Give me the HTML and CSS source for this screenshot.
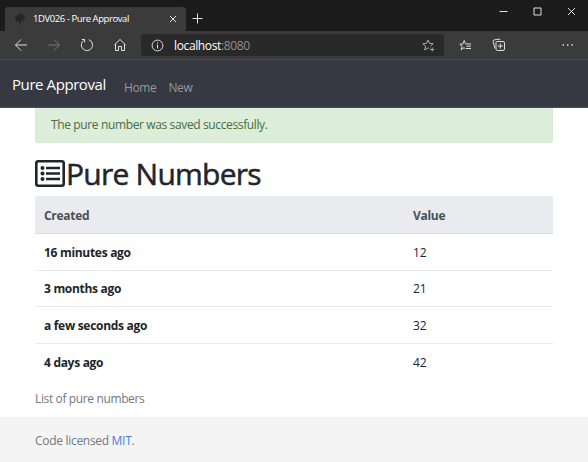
FILE: index.html
```html
<!DOCTYPE html>
<html lang="en">
<head>
<meta charset="utf-8">
<title>1DV026 - Pure Approval</title>
<link rel="stylesheet" href="styles.css">
</head>
<body>
<header class="browser">
  <div class="tabs">
    <div class="tab">
      <svg class="favicon" width="12" height="14" viewBox="0 0 12 14"><path d="M5 1l2 1 1-1 1 2 2 0-1 2 2 1-2 1 0 2-2-1-1 2 0 3H5.500v-3L4 9 2 10 2 8 0 7l2-1-1-2 2 0 0-2 2 1z" fill="#262626"/></svg>
      <span class="tab-title">1DV026 - Pure Approval</span>
      <svg class="tab-close" width="8" height="8" viewBox="0 0 8 8"><path d="M1 1l6 6M7 1L1 7"/></svg>
    </div>
    <svg class="tab-new" width="11" height="11" viewBox="0 0 11 11"><path d="M5.500 .5v10M.5 5.500h10"/></svg>
    <div class="window-buttons">
      <svg width="9" height="9" viewBox="0 0 9 9"><path d="M.5 4.500h8"/></svg>
      <svg width="9" height="9" viewBox="0 0 9 9"><path d="M1 1h7v7H1z"/></svg>
      <svg width="9" height="9" viewBox="0 0 9 9"><path d="M1 1l7 7M8 1L1 8"/></svg>
    </div>
  </div>
  <div class="toolbar">
    <svg class="back" width="14" height="14" viewBox="0 0 14 14"><path d="M13 7H1.500M7 1.500L1.500 7 7 12.500"/></svg>
    <svg class="forward" width="14" height="14" viewBox="0 0 14 14"><path d="M1 7h11.500M7 1.500L12.500 7 7 12.500"/></svg>
    <svg class="reload" width="14" height="14" viewBox="0 0 14 14"><path d="M8.800 1.700a5.600 5.600 0 1 1-5.300.9M1.800 1.500h2.900v2.900"/></svg>
    <svg class="home" width="14" height="14" viewBox="0 0 14 14"><path d="M1.300 7L7 1.500 12.700 7M2.500 6v6.500h3v-4h3v4h3V6"/></svg>
    <div class="address">
      <svg width="13" height="13" viewBox="0 0 13 13"><circle cx="6.500" cy="6.500" r="5.400"/><path d="M6.500 5.500v4M6.500 3.300v1.200"/></svg>
      <span class="url">localhost<span class="port">:8080</span></span>
      <svg class="star" width="13" height="13" viewBox="0 0 13 13"><path d="M7.200 9.500L6 8.800 2.700 11l.9-3.900L.8 4.700l3.700-.4L6 1l1.500 3.300 3.700.4-2.900 2.500M10.200 8.500v4M8.200 10.500h4"/></svg>
    </div>
    <svg class="favorites" width="13" height="13" viewBox="0 0 13 13"><path d="M6.500 9.800L5 8.700 2.200 10.700 3.200 7.400 .8 5.200l3-.2L5.200 1.500l1.300 3.300M6.500 5H12M7.500 7.200H12M7 9.500h5"/></svg>
    <svg class="collections" width="14" height="14" viewBox="0 0 14 14"><path d="M3 10.500L1 3.200Q1 2.400 2 2l5-1q1 0 1.200 1M4.500 3.500H11q1.500 0 1.500 1.500v6q0 1.500-1.500 1.500H5.500Q4 12.500 4 11V4M8.300 5.500v5M5.800 8h5"/></svg>
    <svg class="more" width="12" height="4" viewBox="0 0 12 4"><path d="M.5 2H2M5 2h1.500M9.500 2H11"/></svg>
  </div>
</header>
<nav class="navbar">
  <a class="brand">Pure Approval</a>
  <a class="nav-link">Home</a>
  <a class="nav-link nav-new">New</a>
</nav>
<main class="container">
  <div class="alert">The pure number was saved successfully.</div>
  <h1>
    <svg class="list-icon" width="30" height="27" viewBox="0 0 30 27"><rect x="1.300" y="1.300" width="27.400" height="24.400" rx="2"/><path d="M11 8H25M11 13.500h14M11 19h14"/><g class="dots"><circle cx="7.500" cy="8" r="2"/><circle cx="7.500" cy="13.500" r="2"/><circle cx="7.500" cy="19" r="2"/></g></svg><span class="heading-text">Pure Numbers</span>
  </h1>
  <table>
    <thead><tr><th class="created">Created</th><th class="value">Value</th></tr></thead>
    <tbody>
      <tr><th>16 minutes ago</th><td>12</td></tr>
      <tr><th>3 months ago</th><td>21</td></tr>
      <tr><th>a few seconds ago</th><td>32</td></tr>
      <tr><th>4 days ago</th><td>42</td></tr>
    </tbody>
  </table>
  <p class="caption">List of pure numbers</p>
</main>
<footer>Code licensed <a>MIT</a>.</footer>
</body>
</html>
```
FILE: styles.css
```css
* { box-sizing: border-box; }
body {
  margin: 0;
  height: 462px;
  display: flex;
  flex-direction: column;
  overflow: hidden;
  background: #fff;
  color: #212529;
  font: 12px/18px "Open Sans", "Noto Sans", sans-serif;
  letter-spacing: -.37px;
}
svg { display: block; flex: none; fill: none; stroke: #e0e0e0; stroke-width: 1; }
.browser { flex: none; height: 60px; background: #3b3b3b; border-bottom: 1px solid #4a4b50; }
.tabs { height: 31px; display: flex; background: #1b1b1b; padding-left: 5px; }
.tab {
  width: 181px;
  height: 24px;
  margin-top: 7px;
  padding: 0 9px;
  display: flex;
  align-items: center;
  border-radius: 3px 3px 0 0;
  background: #3b3b3b;
  color: #fff;
}
.favicon { stroke: none; }
.tab-title { margin-left: 7px; font-size: 9.5px; letter-spacing: -.42px; white-space: nowrap; }
.tab-close { margin-left: auto; }
.tab-new { margin: 13px 0 0 6px; }
.window-buttons { display: flex; gap: 25px; margin: 7px 12.5px 0 auto; }
.toolbar { height: 28px; display: flex; align-items: center; padding: 0 14px; }
.forward { margin-left: 19px; stroke: #777; }
.reload { margin-left: 19px; }
.home { margin-left: 19px; }
.address {
  width: 303px;
  height: 22px;
  margin-left: 14px;
  padding: 0 9px;
  display: flex;
  align-items: center;
  border-radius: 3px;
  background: #292929;
}
.address svg:first-child { margin-left: 1px; }
.url { margin-left: 10px; padding-top: 1px; color: #fff; }
.port { color: #909090; }
.star.star { margin-left: auto; stroke: #aaa; }
.favorites { margin-left: 15px; }
.collections { margin-left: 20px; }
.more { margin-left: auto; stroke-width: 1.4; }
.navbar {
  flex: none;
  height: 48px;
  padding: 0 12px;
  display: flex;
  align-items: baseline;
  line-height: 50px;
  background: #363941;
  border-bottom: 1px solid #4a4c53;
}
.brand { width: 112px; color: #fff; font-size: 15px; letter-spacing: -.42px; line-height: 49px; white-space: nowrap; }
.nav-link { position: relative; top: 2px; color: #96989b; }
.nav-new { margin-left: 12px; }
.container { flex: none; width: 518px; margin-left: 35px; }
.alert {
  height: 35px;
  padding: 0 15px;
  border: 1px solid #d7ead6;
  border-top: 0;
  border-radius: 0 0 3px 3px;
  background: #dcedda;
  color: #4d6c42;
  line-height: 34px;
}
h1 { display: flex; align-items: center; height: 38px; margin: 12px 0 3px; font-size: 30px; font-weight: 500; line-height: 38px; }
.list-icon { margin-top: -1px; stroke: #212529; stroke-width: 2.6; }
.dots { fill: #212529; stroke: none; }
.heading-text { padding-left: 1px; letter-spacing: -.75px; white-space: nowrap; -webkit-text-stroke: .5px #212529; }
table { width: 100%; border-collapse: separate; border-spacing: 0; table-layout: fixed; }
th, td { height: 36.5px; padding: 2px 9px 0; border-bottom: 1px solid #e9eaec; text-align: left; }
th { letter-spacing: -.3px; }
td { letter-spacing: -.2px; }
thead th { height: 38px; border-bottom: 1px solid #dcdfe2; background: #e9ebef; color: #495057; }
tbody tr:last-child > * { border-bottom: 0; }
.created { width: 369px; }
.caption { margin: 9px 0 9px; padding-top: 1px; color: #73797e; }
footer { flex: 1; padding: 15px 35px; background: #f4f4f4; color: #73797e; letter-spacing: -.3px; }
footer a { color: #5078e8; }
```
